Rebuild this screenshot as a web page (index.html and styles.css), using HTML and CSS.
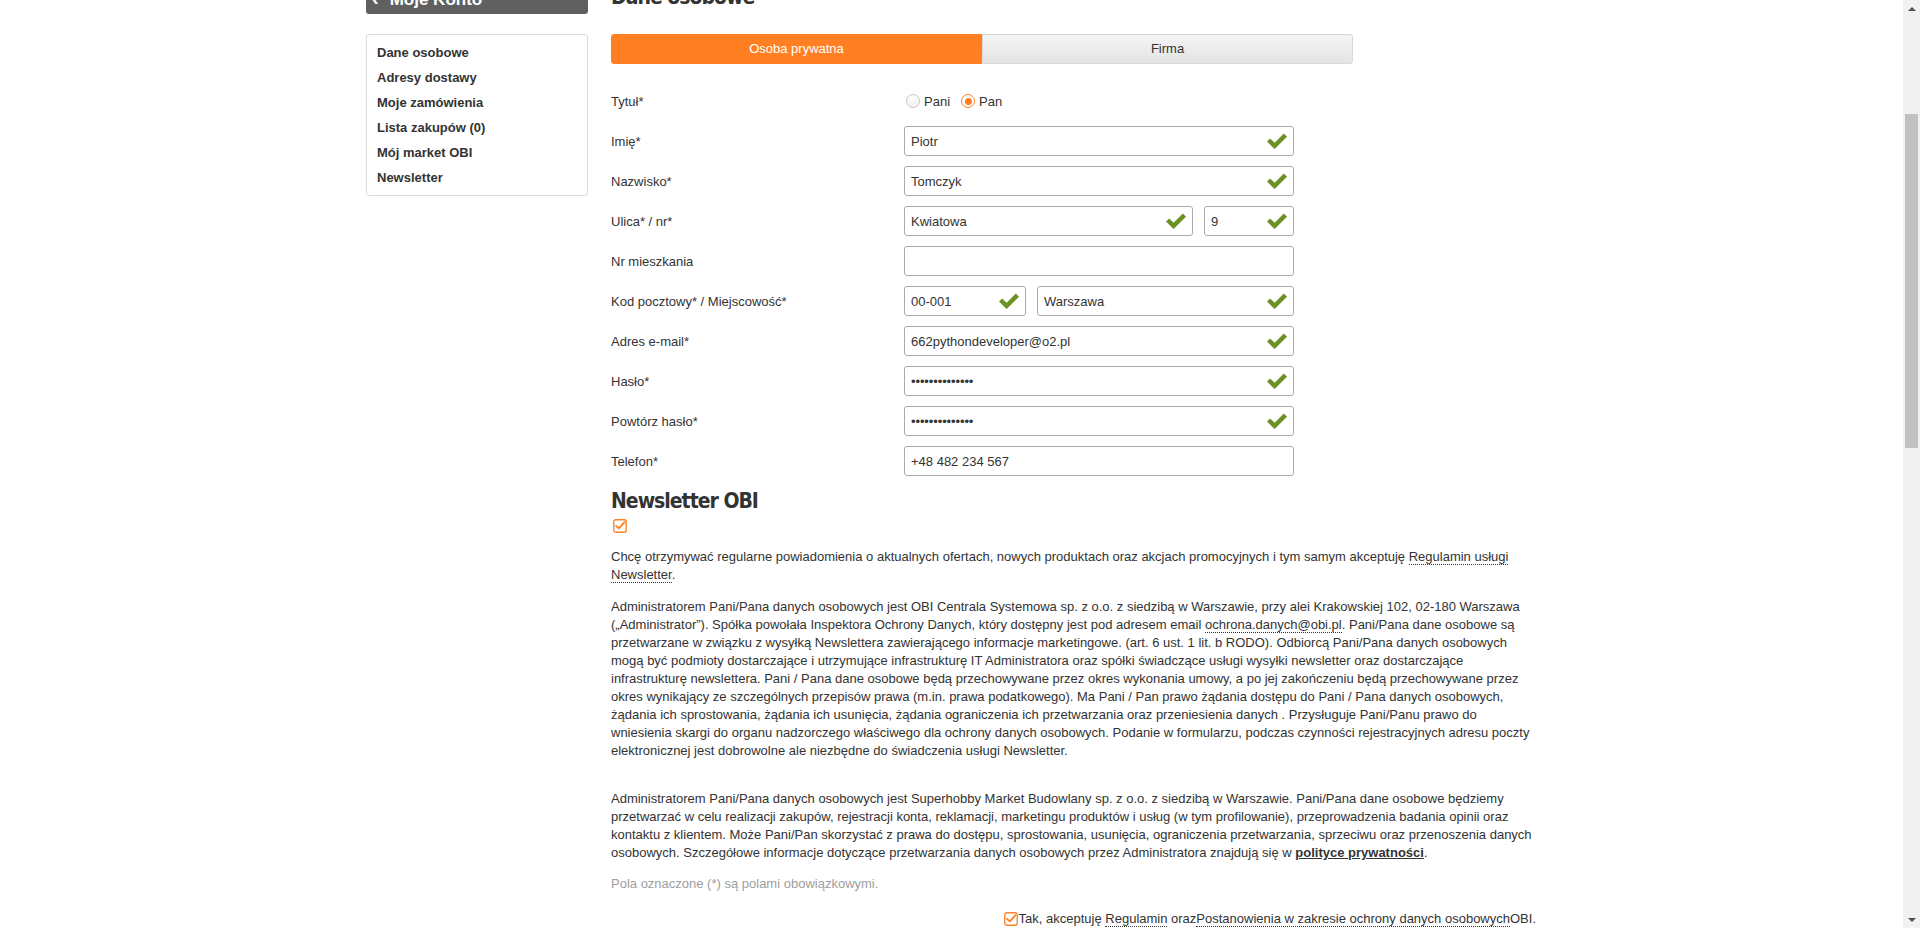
FILE: index.html
```html
<!DOCTYPE html>
<html lang="pl">
<head>
<meta charset="utf-8">
<title>Dane osobowe – Moje Konto</title>
<link rel="stylesheet" href="styles.css">
</head>
<body>
<div class="viewport">
  <div class="page">
    <div class="container">
      <aside class="sidebar">
        <div class="account-head"><span class="chev">&lsaquo;</span>Moje Konto</div>
        <nav class="menu">
          <a href="#">Dane osobowe</a>
          <a href="#">Adresy dostawy</a>
          <a href="#">Moje zamówienia</a>
          <a href="#">Lista zakupów (0)</a>
          <a href="#">Mój market OBI</a>
          <a href="#">Newsletter</a>
        </nav>
      </aside>

      <main class="content">
        <h1 class="title">Dane osobowe</h1>

        <div class="tabs">
          <div class="tab tab-active">Osoba prywatna</div>
          <div class="tab">Firma</div>
        </div>

        <div class="form">
          <div class="row">
            <div class="label">Tytuł*</div>
            <div class="radios">
              <span class="radio"></span><span class="radio-text">Pani</span>
              <span class="radio radio-on"></span><span class="radio-text">Pan</span>
            </div>
          </div>

          <div class="row">
            <div class="label">Imię*</div>
            <div class="fields">
              <div class="field w-full"><span class="val">Piotr</span><svg class="ok" viewBox="0 0 20 16"><path d="M0 8.6L3.2 5.5L7.6 9.8L16.8 0.5L20 3.7L7.6 16Z"/></svg></div>
            </div>
          </div>

          <div class="row">
            <div class="label">Nazwisko*</div>
            <div class="fields">
              <div class="field w-full"><span class="val">Tomczyk</span><svg class="ok" viewBox="0 0 20 16"><path d="M0 8.6L3.2 5.5L7.6 9.8L16.8 0.5L20 3.7L7.6 16Z"/></svg></div>
            </div>
          </div>

          <div class="row">
            <div class="label">Ulica* / nr*</div>
            <div class="fields">
              <div class="field w-street"><span class="val">Kwiatowa</span><svg class="ok" viewBox="0 0 20 16"><path d="M0 8.6L3.2 5.5L7.6 9.8L16.8 0.5L20 3.7L7.6 16Z"/></svg></div>
              <div class="field w-num"><span class="val">9</span><svg class="ok" viewBox="0 0 20 16"><path d="M0 8.6L3.2 5.5L7.6 9.8L16.8 0.5L20 3.7L7.6 16Z"/></svg></div>
            </div>
          </div>

          <div class="row">
            <div class="label">Nr mieszkania</div>
            <div class="fields">
              <div class="field w-full"><span class="val"></span></div>
            </div>
          </div>

          <div class="row">
            <div class="label">Kod pocztowy* / Miejscowość*</div>
            <div class="fields">
              <div class="field w-zip"><span class="val">00-001</span><svg class="ok" viewBox="0 0 20 16"><path d="M0 8.6L3.2 5.5L7.6 9.8L16.8 0.5L20 3.7L7.6 16Z"/></svg></div>
              <div class="field w-city"><span class="val">Warszawa</span><svg class="ok" viewBox="0 0 20 16"><path d="M0 8.6L3.2 5.5L7.6 9.8L16.8 0.5L20 3.7L7.6 16Z"/></svg></div>
            </div>
          </div>

          <div class="row">
            <div class="label">Adres e-mail*</div>
            <div class="fields">
              <div class="field w-full"><span class="val">662pythondeveloper@o2.pl</span><svg class="ok" viewBox="0 0 20 16"><path d="M0 8.6L3.2 5.5L7.6 9.8L16.8 0.5L20 3.7L7.6 16Z"/></svg></div>
            </div>
          </div>

          <div class="row">
            <div class="label">Hasło*</div>
            <div class="fields">
              <div class="field w-full"><span class="val pass">••••••••••••••</span><svg class="ok" viewBox="0 0 20 16"><path d="M0 8.6L3.2 5.5L7.6 9.8L16.8 0.5L20 3.7L7.6 16Z"/></svg></div>
            </div>
          </div>

          <div class="row">
            <div class="label">Powtórz hasło*</div>
            <div class="fields">
              <div class="field w-full"><span class="val pass">••••••••••••••</span><svg class="ok" viewBox="0 0 20 16"><path d="M0 8.6L3.2 5.5L7.6 9.8L16.8 0.5L20 3.7L7.6 16Z"/></svg></div>
            </div>
          </div>

          <div class="row">
            <div class="label">Telefon*</div>
            <div class="fields">
              <div class="field w-full"><span class="val">+48 482 234 567</span></div>
            </div>
          </div>
        </div>

        <h2 class="subtitle">Newsletter OBI</h2>
        <svg class="cbox nl-box" viewBox="0 0 14 14"><rect x="0.75" y="0.75" width="12.5" height="12.5" rx="2" ry="2"/><path class="tick" d="M3 6.8L5.8 9.4L11.6 3.2"/></svg>

        <p class="text p1">Chcę otrzymywać regularne powiadomienia o aktualnych ofertach, nowych produktach oraz akcjach promocyjnych i tym samym akceptuję <a class="dotted" href="#">Regulamin usługi Newsletter</a>.</p>

        <p class="text p2">Administratorem Pani/Pana danych osobowych jest OBI Centrala Systemowa sp. z o.o. z siedzibą w Warszawie, przy alei Krakowskiej 102, 02-180 Warszawa („Administrator”). Spółka powołała Inspektora Ochrony Danych, który dostępny jest pod adresem email <a class="dotted" href="#">ochrona.danych@obi.pl</a>. Pani/Pana dane osobowe są przetwarzane w związku z wysyłką Newslettera zawierającego informacje marketingowe. (art. 6 ust. 1 lit. b RODO). Odbiorcą Pani/Pana danych osobowych mogą być podmioty dostarczające i utrzymujące infrastrukturę IT Administratora oraz spółki świadczące usługi wysyłki newsletter oraz dostarczające infrastrukturę newslettera. Pani / Pana dane osobowe będą przechowywane przez okres wykonania umowy, a po jej zakończeniu będą przechowywane przez okres wynikający ze szczególnych przepisów prawa (m.in. prawa podatkowego). Ma Pani / Pan prawo żądania dostępu do Pani / Pana danych osobowych, żądania ich sprostowania, żądania ich usunięcia, żądania ograniczenia ich przetwarzania oraz przeniesienia danych . Przysługuje Pani/Panu prawo do wniesienia skargi do organu nadzorczego właściwego dla ochrony danych osobowych. Podanie w formularzu, podczas czynności rejestracyjnych adresu poczty elektronicznej jest dobrowolne ale niezbędne do świadczenia usługi Newsletter.</p>

        <p class="text p3">Administratorem Pani/Pana danych osobowych jest Superhobby Market Budowlany sp. z o.o. z siedzibą w Warszawie. Pani/Pana dane osobowe będziemy przetwarzać w celu realizacji zakupów, rejestracji konta, reklamacji, marketingu produktów i usług (w tym profilowanie), przeprowadzenia badania opinii oraz kontaktu z klientem. Może Pani/Pan skorzystać z prawa do dostępu, sprostowania, usunięcia, ograniczenia przetwarzania, sprzeciwu oraz przenoszenia danych osobowych. Szczegółowe informacje dotyczące przetwarzania danych osobowych przez Administratora znajdują się w <a class="strong-link" href="#">polityce prywatności</a>.</p>

        <p class="text required">Pola oznaczone (*) są polami obowiązkowymi.</p>

        <div class="accept">
          <svg class="cbox" viewBox="0 0 14 14"><rect x="0.75" y="0.75" width="12.5" height="12.5" rx="2" ry="2"/><path class="tick" d="M3 6.8L5.8 9.4L11.6 3.2"/></svg>
          <span class="accept-text">Tak, akceptuję <a class="dotted" href="#">Regulamin</a> oraz<a class="dotted" href="#">Postanowienia w zakresie ochrony danych osobowych</a>OBI.</span>
        </div>
      </main>
    </div>
  </div>

  <div class="scrollbar">
    <div class="sb-btn"><span class="arrow-up"></span></div>
    <div class="sb-thumb"></div>
    <div class="sb-space"></div>
    <div class="sb-btn"><span class="arrow-down"></span></div>
  </div>
</div>
</body>
</html>
```

FILE: styles.css
```css
html, body {
  margin: 0;
  padding: 0;
}

body {
  font-family: "Liberation Sans", Arial, sans-serif;
  font-size: 13px;
  color: #333;
  background: #fff;
}

.viewport {
  display: flex;
  height: 928px;
  overflow: hidden;
}

.page {
  flex: 1;
  overflow: hidden;
}

.container {
  width: 1170px;
  margin-left: 366px;
  margin-top: -23px;
  display: flex;
  gap: 23px;
  align-items: flex-start;
}

/* ---------- sidebar ---------- */
.sidebar {
  width: 222px;
  flex: 0 0 222px;
}

.account-head {
  box-sizing: border-box;
  height: 37px;
  padding: 11px 0 0 6px;
  line-height: 20px;
  background: #606060;
  border-radius: 0 0 3px 3px;
  color: #fff;
  font-weight: bold;
  font-size: 17px;
}

.chev {
  font-size: 20px;
  margin-right: 11px;
}

.menu {
  margin-top: 20px;
  border: 1px solid #dcdcdc;
  border-radius: 3px;
  padding: 5px 10px;
}

.menu a {
  display: block;
  line-height: 25px;
  font-weight: bold;
  font-size: 13px;
  color: #333;
  text-decoration: none;
}

/* ---------- content ---------- */
.content {
  flex: 1;
  min-width: 0;
}

.title {
  margin: 7px 0 24px;
  font-family: "Liberation Sans Narrow", "DejaVu Sans Condensed", "Liberation Sans", sans-serif;
  font-weight: bold;
  font-size: 21px;
  line-height: 26px;
  letter-spacing: -1px;
  color: #333;
}

.tabs {
  display: flex;
  width: 742px;
  height: 30px;
}

.tab {
  flex: 1;
  box-sizing: border-box;
  text-align: center;
  line-height: 28px;
  font-size: 13px;
  color: #333;
  background: linear-gradient(#f4f4f4, #e4e4e4);
  border: 1px solid #d8d8d8;
  border-radius: 0 3px 3px 0;
}

.tab-active {
  background: #ff7f22;
  border-color: #ff7f22;
  color: #fff;
  border-radius: 3px 0 0 3px;
}

.form {
  margin-top: 22px;
}

.row {
  display: flex;
  align-items: center;
  height: 30px;
  margin-bottom: 10px;
}

.row:last-child {
  margin-bottom: 0;
}

.label {
  width: 293px;
  flex: 0 0 293px;
}

.fields {
  display: flex;
  gap: 11px;
}

.field {
  box-sizing: border-box;
  height: 30px;
  display: flex;
  align-items: center;
  padding: 0 6px;
  border: 1px solid #ababab;
  border-radius: 3px;
  background: #fff;
}

.val {
  flex: 1;
  white-space: nowrap;
}

.pass {
  letter-spacing: -0.1px;
}

.w-full { width: 390px; }
.w-street { width: 289px; }
.w-num { width: 90px; }
.w-zip { width: 122px; }
.w-city { width: 257px; }

.ok {
  width: 20px;
  height: 16px;
  flex: 0 0 20px;
  fill: #6b9223;
}

.radios {
  display: flex;
  align-items: center;
  padding-left: 2px;
}

.radio {
  box-sizing: border-box;
  width: 14px;
  height: 14px;
  border: 1px solid #c6c6c6;
  border-radius: 50%;
  background: linear-gradient(#fff, #f1f1f1);
  display: flex;
  align-items: center;
  justify-content: center;
}

.radio-on {
  border-color: #ff7f22;
  background: #fff;
}

.radio-on::after {
  content: "";
  width: 7px;
  height: 7px;
  border-radius: 50%;
  background: #ff7f22;
}

.radio-text {
  margin-left: 4px;
  margin-right: 11px;
}

/* ---------- newsletter ---------- */
.subtitle {
  margin: 13px 0 0;
  font-family: "Liberation Sans Narrow", "DejaVu Sans Condensed", "Liberation Sans", sans-serif;
  font-weight: bold;
  font-size: 21px;
  line-height: 24px;
  letter-spacing: -1px;
  color: #333;
}

.cbox {
  width: 14px;
  height: 14px;
  display: block;
  flex: 0 0 14px;
}

.cbox rect {
  fill: #fff;
  stroke: #ff7f22;
  stroke-width: 1.3;
}

.cbox .tick {
  fill: none;
  stroke: #ff7f22;
  stroke-width: 1.8;
  stroke-linecap: round;
  stroke-linejoin: round;
}

.nl-box {
  margin: 6px 0 0 2px;
}

.text {
  margin: 0;
  line-height: 18px;
  font-size: 13px;
  color: #333;
}

.p1 { margin-top: 15px; }
.p2 { margin-top: 14px; }
.p3 { margin-top: 30px; }

.required {
  margin-top: 13px;
  color: #9e9e9e;
}

.dotted {
  color: #333;
  text-decoration: none;
  border-bottom: 1px dotted #333;
}

.strong-link {
  color: #333;
  font-weight: bold;
  text-decoration: underline;
}

.accept {
  margin-top: 17px;
  display: flex;
  justify-content: flex-end;
  align-items: center;
  line-height: 18px;
}

.accept-text {
  margin-left: 1px;
}

/* ---------- scrollbar ---------- */
.scrollbar {
  width: 17px;
  flex: 0 0 17px;
  background: #f1f1f1;
  display: flex;
  flex-direction: column;
  align-items: center;
}

.sb-btn {
  height: 17px;
  width: 17px;
  display: flex;
  align-items: center;
  justify-content: center;
}

.arrow-up {
  width: 0;
  height: 0;
  border-left: 4px solid transparent;
  border-right: 4px solid transparent;
  border-bottom: 4px solid #505050;
}

.arrow-down {
  width: 0;
  height: 0;
  border-left: 4px solid transparent;
  border-right: 4px solid transparent;
  border-top: 4px solid #505050;
}

.sb-thumb {
  margin-top: 97px;
  width: 13px;
  height: 334px;
  background: #c1c1c1;
}

.sb-space {
  flex: 1;
}
```
